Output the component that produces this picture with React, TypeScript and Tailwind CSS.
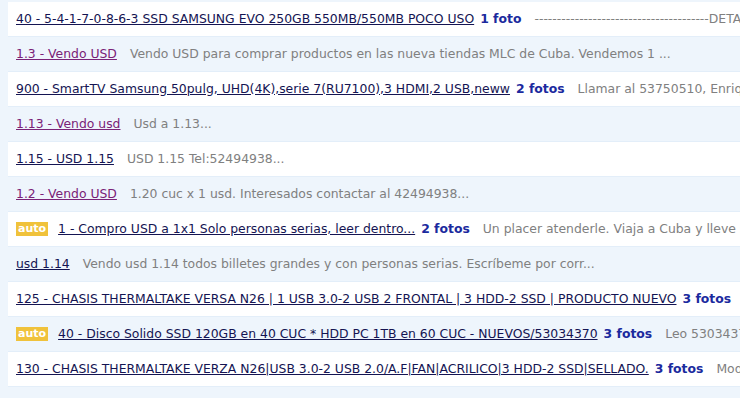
import React from "react";

interface Listing {
  title: string;
  visited?: boolean;
  auto?: boolean;
  photos?: string;
  desc?: string;
}

const listings: Listing[] = [
  {
    title: "40 - 5-4-1-7-0-8-6-3 SSD SAMSUNG EVO 250GB 550MB/550MB POCO USO",
    photos: "1 foto",
    desc: "---------------------------------------DETALLES---------------------------------------",
  },
  {
    title: "1.3 - Vendo USD",
    visited: true,
    desc: "Vendo USD para comprar productos en las nueva tiendas MLC de Cuba. Vendemos 1 ...",
  },
  {
    title: "900 - SmartTV Samsung 50pulg, UHD(4K),serie 7(RU7100),3 HDMI,2 USB,neww",
    photos: "2 fotos",
    desc: "Llamar al 53750510, Enrique...",
  },
  { title: "1.13 - Vendo usd", visited: true, desc: "Usd a 1.13..." },
  { title: "1.15 - USD 1.15", desc: "USD 1.15 Tel:52494938..." },
  {
    title: "1.2 - Vendo USD",
    visited: true,
    desc: "1.20 cuc x 1 usd. Interesados contactar al 42494938...",
  },
  {
    title: "1 - Compro USD a 1x1 Solo personas serias, leer dentro...",
    auto: true,
    photos: "2 fotos",
    desc: "Un placer atenderle. Viaja a Cuba y lleve su...",
  },
  {
    title: "usd 1.14",
    desc: "Vendo usd 1.14 todos billetes grandes y con personas serias. Escríbeme por corr...",
  },
  {
    title: "125 - CHASIS THERMALTAKE VERSA N26 | 1 USB 3.0-2 USB 2 FRONTAL | 3 HDD-2 SSD | PRODUCTO NUEVO",
    photos: "3 fotos",
    desc: "Nuevo...",
  },
  {
    title: "40 - Disco Solido SSD 120GB en 40 CUC * HDD PC 1TB en 60 CUC - NUEVOS/53034370",
    auto: true,
    photos: "3 fotos",
    desc: "Leo 53034370...",
  },
  {
    title: "130 - CHASIS THERMALTAKE VERZA N26|USB 3.0-2 USB 2.0/A.F|FAN|ACRILICO|3 HDD-2 SSD|SELLADO.",
    photos: "3 fotos",
    desc: "Moderno...",
  },
];

const Row: React.FC<{ item: Listing; odd: boolean }> = ({ item, odd }) => (
  <div
    className={`flex h-[35px] items-center overflow-hidden whitespace-nowrap pl-2 border-b border-[#e3eef9] ${
      odd ? "bg-transparent" : "bg-white"
    }`}
  >
    {item.auto && (
      <span className="mr-[10px] bg-[#f0c23b] px-[2px] text-[11px] font-bold leading-[14px] text-white">
        auto
      </span>
    )}
    <a
      href="#"
      className={`underline ${item.visited ? "text-[#7a2277]" : "text-[#141452]"}`}
    >
      {item.title}
    </a>
    {item.photos && (
      <span className="ml-[6px] font-bold text-[#1b2a9e]">{item.photos}</span>
    )}
    {item.desc && <span className="ml-[13px] text-[#808080]">{item.desc}</span>}
  </div>
);

export default function App() {
  return (
    <div className="h-[398px] w-[740px] overflow-hidden bg-[#eef5fc] pl-2 pt-[2px] font-['DejaVu_Sans',sans-serif] text-[12.4px]">
      {listings.map((item, i) => (
        <Row key={i} item={item} odd={i % 2 === 1} />
      ))}
    </div>
  );
}
